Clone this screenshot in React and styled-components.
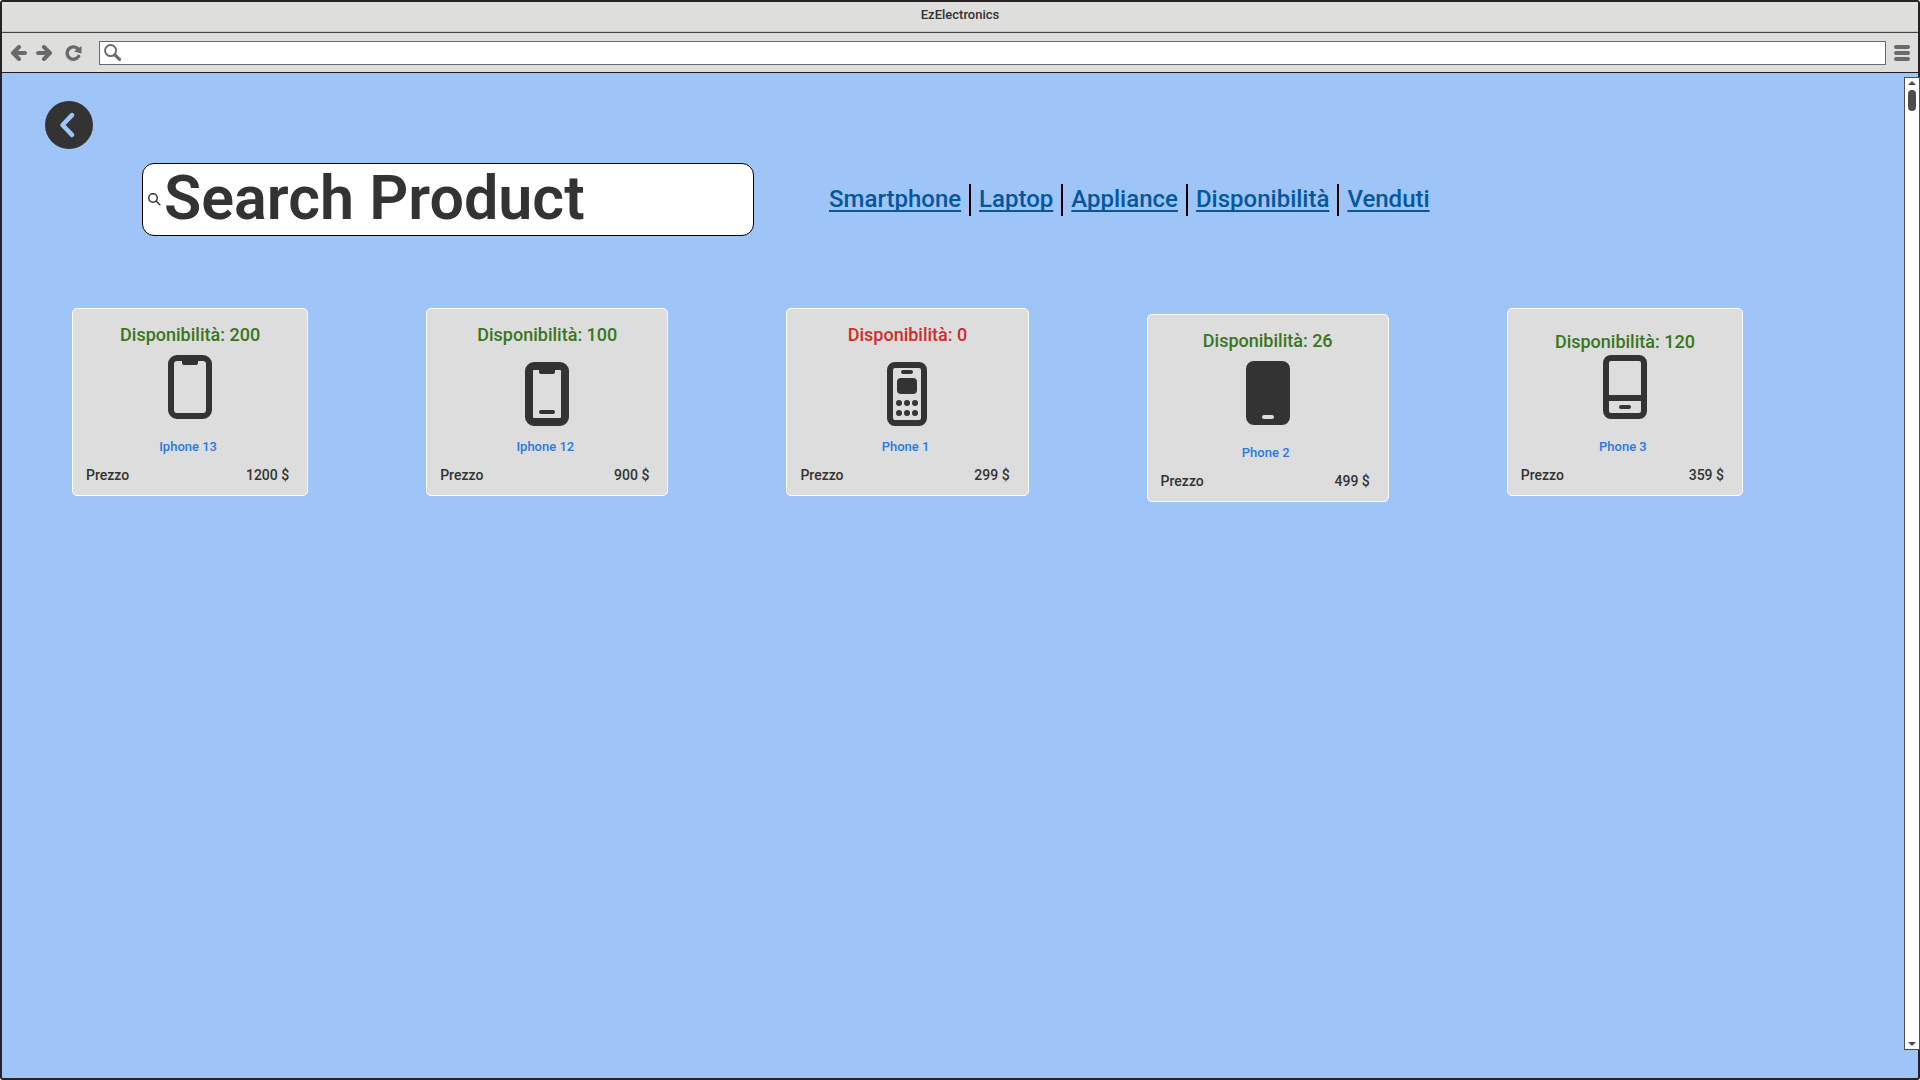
import React from "react";
import styled, { createGlobalStyle } from "styled-components";

const INK = "#333333";
const CHROME = "#dededd";
const GLYPH = "#6a6a6a";

const GlobalStyle = createGlobalStyle`
  *, *::before, *::after { box-sizing: border-box; }
  body {
    margin: 0;
    color: ${INK};
    font-family: Roboto, "Liberation Sans", Arial, sans-serif;
    font-weight: 500;
  }
  button, input { font: inherit; color: inherit; }
  button { border: 0; padding: 0; background: none; cursor: pointer; }
  svg { display: block; flex: none; }
`;

const BrowserWindow = styled.div`
  display: flex;
  flex-direction: column;
  min-height: 100vh;
  border: 2px solid #272324;
  border-radius: 3px;
  background: #9fc4f8;
`;

const TitleBar = styled.header`
  height: 31px;
  padding-top: 4px;
  border-bottom: 1px solid #444444;
  background: ${CHROME};
  box-shadow: inset 0 -1px 0 #c9c9c8;
  font-size: 13px;
  line-height: 18px;
  text-align: center;
`;

const Toolbar = styled.div`
  display: flex;
  align-items: center;
  height: 40px;
  padding: 0 8px 0 9px;
  border-bottom: 1px solid #231f20;
  background: ${CHROME};
  color: ${GLYPH};
`;

const History = styled.div`
  display: flex;
  gap: 9px;
  margin-right: 13px;
`;

const IconButton = styled.button`
  flex: none;
  color: ${GLYPH};
`;

const AddressBar = styled.label`
  flex: 1;
  display: flex;
  align-items: center;
  gap: 4px;
  height: 24px;
  margin: 0 8px 0 17px;
  padding: 0 4px;
  border: 1px solid ${GLYPH};
  background: #ffffff;
`;

const BareInput = styled.input`
  flex: 1;
  min-width: 0;
  border: 0;
  padding: 0;
  outline: 0;
  background: transparent;
  font-size: 13px;
  &::placeholder { color: ${INK}; opacity: 1; }
`;

const ProductInput = styled(BareInput)`
  padding-bottom: 4px;
  font-size: 61px;
  font-weight: 600;
`;

const Viewport = styled.div`
  flex: 1;
  display: flex;
`;

const Page = styled.main`
  flex: 1;
  min-width: 0;
  padding: 28px 161px 28px 70px;
`;

const BackButton = styled.button`
  display: block;
  margin-left: -27px;
`;

const SearchRow = styled.div`
  display: flex;
  align-items: center;
  gap: 75px;
  margin: 14px 0 72px 70px;
`;

const SearchBox = styled.label`
  flex: 0 1 612px;
  min-width: 0;
  display: flex;
  align-items: center;
  gap: 3px;
  height: 73px;
  padding: 0 5px;
  border: 1px solid #000000;
  border-radius: 12px;
  background: #ffffff;
`;

const Categories = styled.nav`
  display: flex;
  align-items: center;
  font-size: 24px;
  line-height: 32px;
`;

const CategoryLink = styled.a`
  padding-bottom: 2px;
  color: #04579b;
  line-height: 30px;
  text-decoration: underline;
  text-decoration-thickness: 2px;
  text-underline-offset: 3px;
  text-decoration-skip-ink: none;
  & + & {
    margin-left: 8px;
    padding-left: 8px;
    border-left: 2px solid #000000;
  }
`;

const Products = styled.section`
  display: grid;
  grid-template-columns: 236fr 242fr 242fr 242fr 236fr;
  align-items: start;
  column-gap: 118px;
`;

const Card = styled.article`
  display: grid;
  grid-template-rows: 46px 82px 28px 20px;
  justify-items: center;
  margin-top: ${(p) => (p.$lowered ? 6 : 0)}px;
  padding-bottom: 10px;
  border: 1px solid #ffffff;
  border-radius: 5px;
  background: #dddddd;
  line-height: 20px;
`;

const Stock = styled.div`
  padding-top: ${(p) => (p.$low ? 23 : 16)}px;
  color: ${(p) => (p.$empty ? "#d32a2a" : "#38761d")};
  font-size: 18px;
`;

const Picture = styled.div`
  padding-top: ${(p) => (p.$low ? 7 : 0)}px;
  color: ${INK};
`;

const Name = styled.a`
  padding-right: 4px;
  color: #2b78e4;
  font-size: 13px;
  text-decoration: none;
`;

const PriceRow = styled.div`
  display: flex;
  justify-content: space-between;
  width: 100%;
  padding: 0 18px 0 13px;
  font-size: 14px;
`;

const ScrollBar = styled.div`
  display: flex;
  flex-direction: column;
  align-items: center;
  width: 16px;
  margin: 4px -2px 28px 0;
  padding: 3px 0;
  border: 1px solid #4d4d4d;
  background: #ffffff;
`;

const Thumb = styled.div`
  width: 8px;
  height: 21px;
  margin: 4px 0 auto;
  border-radius: 4px;
  background: #4d4d4d;
`;

const ArrowGlyph = ({ flip }) => (
  <svg width="16" height="16" viewBox="0 0 16 16" fill="none" stroke="currentColor" strokeWidth="4" strokeLinecap="round" strokeLinejoin="round">
    <path d={flip ? "M2 8H13M8 2L14 8L8 14" : "M14 8H3M8 2L2 8L8 14"} />
  </svg>
);

const ReloadGlyph = () => (
  <svg width="17" height="16" viewBox="0 0 17 16">
    <path d="M13.6 11.4A6.2 6.2 0 1 1 12.6 3.6" fill="none" stroke="currentColor" strokeWidth="3.4" strokeLinecap="round" />
    <path d="M16.5 1V8.5L9 6.5Z" fill="currentColor" />
  </svg>
);

const MenuGlyph = () => (
  <svg width="16" height="16" viewBox="0 0 16 16" fill="currentColor">
    <rect width="16" height="4" rx="2" />
    <rect y="6" width="16" height="4" rx="2" />
    <rect y="12" width="16" height="4" rx="2" />
  </svg>
);

const SearchGlyph = ({ size, color, bold }) => (
  <svg width={size} height={size} viewBox="0 0 16 16" fill="none" stroke={color} strokeWidth="1.8" strokeLinecap="round">
    <circle cx="6.2" cy="6.2" r="5.2" />
    <path d="M10.2 10.2L14.6 14.4" strokeWidth={bold ? 3 : 1.8} />
  </svg>
);

const BackGlyph = () => (
  <svg width="48" height="48" viewBox="0 0 48 48">
    <circle cx="24" cy="24" r="24" fill={INK} />
    <path d="M27 14.2L17.5 24L27 33.8" fill="none" stroke="#9fc4f8" strokeWidth="4.6" strokeLinecap="round" strokeLinejoin="round" />
  </svg>
);

const ScrollGlyph = ({ down }) => (
  <svg width="8" height="5" viewBox="0 0 8 5" fill="#4d4d4d">
    <path d={down ? "M0 1H8L4 5Z" : "M0 4H8L4 0Z"} />
  </svg>
);

const phones = {
  notch: (
    <svg width="44" height="64" viewBox="0 0 44 64" fill="currentColor">
      <rect x="3" y="3" width="38" height="58" rx="6" fill="none" stroke="currentColor" strokeWidth="6" />
      <path d="M14 5H30V8Q30 10 28 10H16Q14 10 14 8Z" />
    </svg>
  ),
  thick: (
    <svg width="44" height="64" viewBox="0 0 44 64" fill="currentColor">
      <rect x="4" y="4" width="36" height="56" rx="5" fill="none" stroke="currentColor" strokeWidth="8" />
      <path d="M14 7H30V10Q30 12 28 12H16Q14 12 14 10Z" />
      <rect x="14" y="48" width="16" height="4" rx="2" />
    </svg>
  ),
  keypad: (
    <svg width="40" height="64" viewBox="0 0 40 64" fill="currentColor">
      <rect x="3" y="3" width="34" height="58" rx="5" fill="none" stroke="currentColor" strokeWidth="6" />
      <rect x="14" y="8" width="12" height="4" rx="2" />
      <rect x="10" y="16" width="20" height="16" rx="4" />
      {[41, 51].map((y) => [12, 20, 28].map((x) => <circle key={`${x}-${y}`} cx={x} cy={y} r="3" />))}
    </svg>
  ),
  solid: (
    <svg width="44" height="64" viewBox="0 0 44 64" fill="currentColor">
      <rect width="44" height="64" rx="8" />
      <rect x="16" y="54" width="12" height="4" rx="2" fill="#dddddd" />
    </svg>
  ),
  home: (
    <svg width="44" height="64" viewBox="0 0 44 64" fill="currentColor">
      <rect x="3" y="3" width="38" height="58" rx="5" fill="none" stroke="currentColor" strokeWidth="6" />
      <rect x="4" y="40" width="36" height="6" />
      <rect x="16" y="50" width="12" height="4" rx="2" />
    </svg>
  ),
};

const categories = ["Smartphone", "Laptop", "Appliance", "Disponibilità", "Venduti"];

const products = [
  { name: "Iphone 13", stock: 200, price: 1200, phone: "notch" },
  { name: "Iphone 12", stock: 100, price: 900, phone: "thick", lowPicture: true },
  { name: "Phone 1", stock: 0, price: 299, phone: "keypad", lowPicture: true },
  { name: "Phone 2", stock: 26, price: 499, phone: "solid", lowered: true },
  { name: "Phone 3", stock: 120, price: 359, phone: "home", lowStock: true },
];

export default function App() {
  return (
    <>
      <GlobalStyle />
      <BrowserWindow>
        <TitleBar>EzElectronics</TitleBar>
        <Toolbar>
          <History>
            <IconButton aria-label="Back"><ArrowGlyph /></IconButton>
            <IconButton aria-label="Forward"><ArrowGlyph flip /></IconButton>
          </History>
          <IconButton aria-label="Reload"><ReloadGlyph /></IconButton>
          <AddressBar>
            <SearchGlyph size={17} color={GLYPH} bold />
            <BareInput type="text" aria-label="Address" />
          </AddressBar>
          <IconButton aria-label="Menu"><MenuGlyph /></IconButton>
        </Toolbar>
        <Viewport>
          <Page>
            <BackButton aria-label="Indietro"><BackGlyph /></BackButton>
            <SearchRow>
              <SearchBox>
                <SearchGlyph size={13} color={INK} />
                <ProductInput type="text" placeholder="Search Product" aria-label="Search Product" />
              </SearchBox>
              <Categories>
                {categories.map((label) => (
                  <CategoryLink key={label} href="#">{label}</CategoryLink>
                ))}
              </Categories>
            </SearchRow>
            <Products>
              {products.map((p) => (
                <Card key={p.name} $lowered={p.lowered}>
                  <Stock $empty={p.stock === 0} $low={p.lowStock}>{`Disponibilità: ${p.stock}`}</Stock>
                  <Picture $low={p.lowPicture}>{phones[p.phone]}</Picture>
                  <Name href="#">{p.name}</Name>
                  <PriceRow>
                    <span>Prezzo</span>
                    <span>{`${p.price} $`}</span>
                  </PriceRow>
                </Card>
              ))}
            </Products>
          </Page>
          <ScrollBar>
            <IconButton aria-label="Scroll up"><ScrollGlyph /></IconButton>
            <Thumb />
            <IconButton aria-label="Scroll down"><ScrollGlyph down /></IconButton>
          </ScrollBar>
        </Viewport>
      </BrowserWindow>
    </>
  );
}
